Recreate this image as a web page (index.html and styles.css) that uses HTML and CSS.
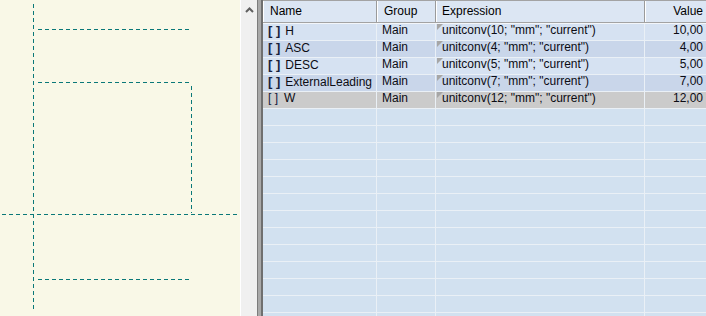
FILE: index.html
```html
<!DOCTYPE html>
<html lang="en">
<head>
  <meta charset="UTF-8">
  <meta name="viewport" content="width=device-width, initial-scale=1.0">
  <title>Parameters</title>
  <link rel="stylesheet" href="styles.css">
</head>
<body>
  <div class="canvas">
    <svg width="240" height="316" viewBox="0 0 240 316">
      <g class="guide">
        <line x1="33.5" y1="4" x2="33.5" y2="312"/>
        <line x1="38" y1="29.5" x2="192" y2="29.5"/>
        <line x1="38" y1="82.5" x2="192" y2="82.5"/>
        <line x1="191.5" y1="86" x2="191.5" y2="213"/>
        <line x1="2" y1="214.5" x2="238" y2="214.5"/>
        <line x1="38" y1="279.5" x2="192" y2="279.5"/>
      </g>
    </svg>
  </div>

  <div class="vscroll">
    <svg class="arrow" width="9" height="6" viewBox="0 0 9 6">
      <polyline points="1,5 4.5,1.5 8,5" />
    </svg>
  </div>
  <div class="frame"></div>

  <div class="grid">
    <div class="row head">
      <div class="cell">Name</div>
      <div class="cell">Group</div>
      <div class="cell">Expression</div>
      <div class="cell value">Value</div>
    </div>

    <div class="row odd">
      <div class="cell"><span class="bracket">[ ]</span>H</div>
      <div class="cell">Main</div>
      <div class="cell expr">unitconv(10; "mm"; "current")</div>
      <div class="cell value">10,00</div>
    </div>
    <div class="row even">
      <div class="cell"><span class="bracket">[ ]</span>ASC</div>
      <div class="cell">Main</div>
      <div class="cell expr">unitconv(4; "mm"; "current")</div>
      <div class="cell value">4,00</div>
    </div>
    <div class="row odd">
      <div class="cell"><span class="bracket">[ ]</span>DESC</div>
      <div class="cell">Main</div>
      <div class="cell expr">unitconv(5; "mm"; "current")</div>
      <div class="cell value">5,00</div>
    </div>
    <div class="row even">
      <div class="cell"><span class="bracket">[ ]</span>ExternalLeading</div>
      <div class="cell">Main</div>
      <div class="cell expr">unitconv(7; "mm"; "current")</div>
      <div class="cell value">7,00</div>
    </div>
    <div class="row selected">
      <div class="cell"><span class="bracket thin">[ ]</span>W</div>
      <div class="cell">Main</div>
      <div class="cell expr">unitconv(12; "mm"; "current")</div>
      <div class="cell value">12,00</div>
    </div>

    <div class="row empty"><div class="cell"></div><div class="cell"></div><div class="cell"></div><div class="cell"></div></div>
    <div class="row empty"><div class="cell"></div><div class="cell"></div><div class="cell"></div><div class="cell"></div></div>
    <div class="row empty"><div class="cell"></div><div class="cell"></div><div class="cell"></div><div class="cell"></div></div>
    <div class="row empty"><div class="cell"></div><div class="cell"></div><div class="cell"></div><div class="cell"></div></div>
    <div class="row empty"><div class="cell"></div><div class="cell"></div><div class="cell"></div><div class="cell"></div></div>
    <div class="row empty"><div class="cell"></div><div class="cell"></div><div class="cell"></div><div class="cell"></div></div>
    <div class="row empty"><div class="cell"></div><div class="cell"></div><div class="cell"></div><div class="cell"></div></div>
    <div class="row empty"><div class="cell"></div><div class="cell"></div><div class="cell"></div><div class="cell"></div></div>
    <div class="row empty"><div class="cell"></div><div class="cell"></div><div class="cell"></div><div class="cell"></div></div>
    <div class="row empty"><div class="cell"></div><div class="cell"></div><div class="cell"></div><div class="cell"></div></div>
    <div class="row empty"><div class="cell"></div><div class="cell"></div><div class="cell"></div><div class="cell"></div></div>
    <div class="row empty"><div class="cell"></div><div class="cell"></div><div class="cell"></div><div class="cell"></div></div>
    <div class="row empty"><div class="cell"></div><div class="cell"></div><div class="cell"></div><div class="cell"></div></div>
  </div>
</body>
</html>
```

FILE: styles.css
```css
html, body {
  margin: 0;
  padding: 0;
  height: 316px;
  overflow: hidden;
}

body {
  display: flex;
  font-family: "Liberation Sans", Arial, sans-serif;
  font-size: 12px;
  color: #0c0c14;
}

/* drawing area on the left */
.canvas {
  width: 240px;
  flex: none;
  background: #f9f8e7;
}

.canvas svg {
  display: block;
}

.guide line {
  stroke: #0a7878;
  stroke-width: 1;
  stroke-dasharray: 4 3;
  shape-rendering: crispEdges;
}

.vscroll {
  width: 16px;
  flex: none;
  background: #f0f0f0;
  border-left: 1px solid #ffffff;
  display: flex;
  justify-content: center;
  padding-top: 7px;
  box-sizing: content-box;
}

.arrow {
  display: block;
}

.arrow polyline {
  fill: none;
  stroke: #606060;
  stroke-width: 2;
}

/* sunken border of the list */
.frame {
  width: 3px;
  flex: none;
  background: #a9a9a9;
  border-left: 1px solid #7c7c7c;
  border-right: 2px solid #6f6f6f;
}

/* parameter list */
.grid {
  flex: 1;
  min-width: 0;
  background: #f3f6fa;
  overflow: hidden;
}

.row {
  display: grid;
  grid-template-columns: 114px 59px 209px 62px;
  height: 16px;
  border-bottom: 1px solid #eaf0f6;
}

.cell {
  border-right: 1px solid #eaf0f6;
  padding: 0 0 3px 5px;
  line-height: 13px;
  white-space: nowrap;
  overflow: hidden;
  position: relative;
}

.cell.value {
  text-align: right;
  padding: 0 4px 3px 0;
  border-right: none;
}

.head {
  height: 21px;
  background: #dce6f3;
  border-top: 1px solid #a3a3a3;
  border-bottom: 1px solid #a3a3a3;
  margin-bottom: 1px;
}

.head .cell {
  line-height: 21px;
  padding: 0 0 0 7px;
  border-right: 1px solid #9a9a9a;
  box-shadow: inset 1px 0 #ffffff;
  color: #000;
}

.head .cell:nth-child(3) {
  padding-left: 6px;
}

.head .cell.value {
  padding: 0 4px 0 0;
  border-right: none;
}

.odd {
  background: #d6e2f2;
}

.even {
  background: #c9d6ea;
}

.selected {
  background: #cbcbcb;
}

.empty {
  background: #d2e1f0;
}

.bracket {
  font-weight: bold;
  font-size: 13px;
  color: #16203c;
  margin-right: 5px;
}

.bracket.thin {
  font-weight: normal;
  font-size: 12px;
  margin-right: 6px;
}

.cell.expr {
  padding-left: 6px;
}

/* little corner marker on expression cells */
.cell.expr::before {
  content: "";
  position: absolute;
  left: 1px;
  top: 0;
  width: 6px;
  height: 6px;
  background: #a6a6a6;
  clip-path: polygon(0 0, 100% 0, 0 100%);
}
```
